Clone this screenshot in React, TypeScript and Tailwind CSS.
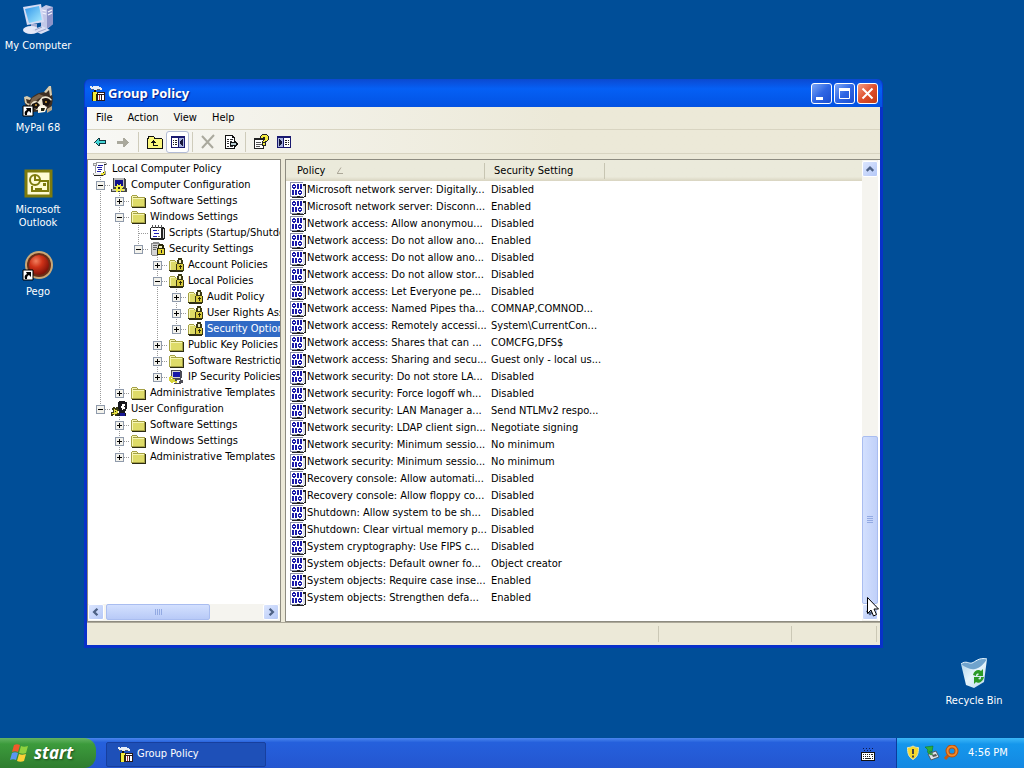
import React, { useState } from 'react';

const FONT = 'font-["DejaVu_Sans_Condensed","Noto_Sans",sans-serif]';

type IconProps = { className?: string };

/* ---------- small icons ---------- */

const Pixel: React.FC<{ children: React.ReactNode; className?: string }> = ({ children, className = 'size-4' }) => (
  <svg viewBox="0 0 16 16" className={`shrink-0 ${className}`} shapeRendering="crispEdges" aria-hidden="true">
    {children}
  </svg>
);

const FolderIcon = () => (
  <Pixel>
    <path d="M1 3h1V2h5v1h1v1h7v10H1z" fill="#a5a145" />
    <path d="M2 5h12v8H2z" fill="#dedb68" />
    <path d="M2 3h5v1H2zM2 4h1v9H2zM3 5h11v1H3z" fill="#f6f5b4" />
    <path d="M15 5h1v10H2v-1h13z" fill="#2c2b12" />
  </Pixel>
);

const LockFolderIcon = () => (
  <Pixel>
    <path d="M1 4h1V3h5v1h1v1h6v8H1z" fill="#a5a145" />
    <path d="M2 5h11v8H2z" fill="#dedb68" />
    <path d="M2 4h5v1H2zM2 5h1v8H2z" fill="#f6f5b4" />
    <path d="M2 14h13v1H2zM1 13h8v1H1z" fill="#2c2b12" />
    <path d="M9 3h1V1h4v2h1v4h1v7H8V7h1z" fill="#3a3812" />
    <path d="M11 3h2v3h-2z" fill="#f0efc0" />
    <path d="M9 7h6v6H9z" fill="#d9cb3c" />
    <path d="M12 8h1v4h-1zM11 9h3v1h-3z" fill="#2b2708" />
  </Pixel>
);

const ServerLockIcon = () => (
  <Pixel>
    <path d="M2 2h2V1h6v1h1v12h-2v1H3v-1H2z" fill="#8b8b8b" />
    <path d="M3 3h6v11H3z" fill="#d5d5d5" />
    <path d="M4 4h4v1H4zM4 6h4v1H4zM4 8h3v1H4z" fill="#666" />
    <path d="M9 4h1V3h4v1h1v3h1v7H8V7h1z" fill="#2a280a" />
    <path d="M10 5h3v2h-3z" fill="#f0efc0" />
    <path d="M9 8h6v5H9z" fill="#e4d334" />
    <path d="M12 9h1v3h-1z" fill="#222" />
  </Pixel>
);

const ScrollIcon = () => (
  <Pixel>
    <path d="M4 1h10v1h1v2h-2v6h1v4h-2v1H2v-1H1v-2h2V5H1V2h3z" fill="#9a9a9a" />
    <path d="M5 2h7v10H4V5h1z" fill="#fff" />
    <path d="M13 4h-1v6h1v4h-2v1H2v-1h9v-3h1V3h2v1z" fill="#222" />
    <path d="M6 4h5v1H6zM5 6h5v1H5zM6 8h4v1H6zM5 10h4v1H5z" fill="#1a1aa6" />
    <path d="M9 12h3v2H9zM12 10h1v3h-1z" fill="#e8e130" />
    <path d="M2 12h7v2H2zM12 2h2v1h-2zM2 3h2v1H2z" fill="#eee" />
  </Pixel>
);

const ComputerIcon = () => (
  <Pixel>
    <path d="M2 1h12v1h1v9h1v4H0v-3h2z" fill="#444" />
    <path d="M3 1h10v9H3z" fill="#b9b9b9" />
    <path d="M4 3h8v6H4z" fill="#10108a" />
    <path d="M1 12h13v2H1z" fill="#bcbcbc" />
    <path d="M6 7h1v1h2V7h1v2h2v2h-1v1h2v2h-2v-1h-1v2H9v-1H7v1H5v-2H3v-1h2v-2H4V9h2z" fill="#f1ee46" />
    <path d="M7 10h2v2H7z" fill="#222" />
  </Pixel>
);

const NotepadIcon = () => (
  <Pixel>
    <path d="M2 2h13v1h1v11h-1v1H2v-1H1V3h1z" fill="#222" />
    <path d="M2 3h10v10H2z" fill="#fff" />
    <path d="M14 4h1v9h-1z" fill="#d9d9d9" />
    <path d="M3 0h1v3H3zM6 0h1v3H6zM9 0h1v3H9zM12 0h1v3h-1z" fill="#555" />
    <path d="M4 5h4v1H4zM5 8h5v1H5zM4 11h4v1H4z" fill="#1d1db4" />
    <path d="M9 5h1v1H9zM9 11h2v1H9z" fill="#777" />
  </Pixel>
);

const IpIcon = () => (
  <Pixel>
    <path d="M3 1h10v1h1v7h-1v2h2v3h-2v1H6v-1h5v-2H3z" fill="#4b4b55" />
    <path d="M4 2h8v7H4z" fill="#d2d2d2" />
    <path d="M5 3h7v5H5z" fill="#1717a8" />
    <path d="M2 7h2v1h1v2h2v2h2v2H7v-1H5v1H3v-1H2v-1H1V8h1z" fill="#d6d33a" />
    <path d="M3 9h1v1H3zM9 11h3v1H9z" fill="#fff" />
  </Pixel>
);

const UserIcon = () => (
  <Pixel>
    <path d="M7 1h1V0h6v1h2v7h-1v2h-1v2h1v3H6v-3h2V9H7z" fill="#17171d" />
    <path d="M11 3h3v6h-3V7h-1V5h1z" fill="#fff" />
    <path d="M13 5h1v1h-1zM12 8h2v1h-2z" fill="#222" />
    <path d="M9 12h5v3H9z" fill="#181894" />
    <path d="M2 6h2v1h1V6h2v2h1v2H7v2h1v2H6v1H4v-1H2v1H0v-4h2V9H1V7h1z" fill="#3a3a12" />
    <path d="M3 8h1v1h2v1h1v2H6v1H4v1H3v-1H1v-1h2z" fill="#e6e040" />
    <path d="M4 10h1v1H4z" fill="#222" />
  </Pixel>
);

const PolicyIcon = () => (
  <Pixel>
    <path d="M0 0h13v15H0z" fill="#8d92a8" />
    <path d="M1 1h12v13H1z" fill="#fff" />
    <path d="M13 2h3v13h-2v-1h1V4h-2zM2 15h5v-1h3v1h4v1H2z" fill="#222" />
    <path d="M13 4h2v10h-2z" fill="#dfe1ea" />
    <path d="M2 2h4v5H2zM7 2h2v5H7zM10 2h2v5h-2zM2 8h2v5H2zM5 8h2v5H5zM8 8h4v5H8z" fill="#1c1caa" />
    <path d="M3 4h2v1H3zM9 10h2v1H9z" fill="#fff" />
    <path d="M2 2h1v1H2zM5 2h1v1H5zM2 6h1v1H2zM5 6h1v1H5zM8 8h1v1H8zM11 8h1v1h-1zM8 12h1v1H8zM11 12h1v1h-1z" fill="#fff" />
  </Pixel>
);

const ToolsIcon = ({ className }: IconProps) => (
  <Pixel className={className}>
    <path d="M1 1h2v1h1V1h6v1h2v1h1v2h-2V4H8v1H5V4H2V3H1z" fill="#e7edf5" />
    <path d="M2 4h2v1H2zM8 4h3v1H8z" fill="#5b6574" />
    <path d="M5 5h2v2H5z" fill="#111" />
    <path d="M4 7h4v9H4z" fill="#f4ec39" />
    <path d="M3 7h1v9H3zM7 9h1v7H7z" fill="#27270a" />
    <path d="M8 7h8v9H8z" fill="#2a1a1a" />
    <path d="M9 8h6v1H9zM9 10h1v5H9zM11 10h1v5h-1zM13 10h2v5h-2z" fill="#fff" />
    <path d="M10 10h1v5h-1z" fill="#b23a3a" />
  </Pixel>
);

/* ---------- toolbar icons ---------- */

const BackIcon = () => (
  <Pixel>
    <path d="M2 8h1V7h1V6h1V5h1V4h2v2h6v4H8v2H6v-1H5v-1H4V9H2z" fill="#10323a" />
    <path d="M3 8h1V7h1V6h1V5h1v2h6v2H7v2H6v-1H5V9H3z" fill="#45d5d6" />
  </Pixel>
);

const ForwardIcon = () => (
  <Pixel>
    <path d="M2 7h6V4h2v1h1v1h1v1h1v1h1v1h-1v1h-1v1h-1v1h-1v1H8v-3H2z" fill="#aaa99d" />
  </Pixel>
);

const UpIcon = () => (
  <Pixel>
    <path d="M0 4h1V2h6v1h1v1h7v1h1v10H0z" fill="#111" />
    <path d="M1 5h14v9H1zM2 3h5v2H2z" fill="#fbf77c" />
    <path d="M6 6h1v1h1v1h1v1H7v2h4v1H6V9H4V8h1V7h1z" fill="#111" />
  </Pixel>
);

const PaneIcon = ({ flip }: { flip?: boolean }) => (
  <Pixel className={flip ? 'size-4 -scale-x-100' : 'size-4'}>
    <path d="M1 2h14v12H1z" fill="#191970" />
    <path d="M2 4h6v9H2z" fill="#fff" />
    <path d="M9 4h5v9H9z" fill="#a9b4de" />
    <path d="M3 6h1v1H3zM5 6h2v1H5zM3 8h1v1H3zM5 8h2v1H5zM3 10h1v1H3zM5 10h2v1H5z" fill="#222" />
    <path d="M12 5h1v7h-1v-1h-1v-1h-1V7h1V6h1z" fill="#16163a" />
  </Pixel>
);

const DeleteIcon = () => (
  <svg viewBox="0 0 16 16" className="size-4" aria-hidden="true">
    <path d="M2 2l11 12M14 1L2 14" stroke="#aaa99d" strokeWidth="2" fill="none" />
  </svg>
);

const ExportIcon = () => (
  <Pixel>
    <path d="M2 1h8v1h1v1h1v12H2z" fill="#111" />
    <path d="M3 2h6v2h2v10H3z" fill="#fff" />
    <path d="M4 5h2v1H4zM7 5h3v1H7zM4 7h2v1H4zM7 7h2v1H7zM4 9h2v1H4zM4 12h2v1H4zM7 12h3v1H7z" fill="#333" />
    <path d="M7 8h4V6h1v1h1v1h1v1h1v2h-1v1h-1v1h-1v1h-1v-2H7z" fill="#111" />
    <path d="M8 9h5v2H8z" fill="#b8cdd0" />
  </Pixel>
);

const PropertiesIcon = () => (
  <Pixel>
    <path d="M1 4h10v11H1z" fill="#222" />
    <path d="M2 6h8v8H2z" fill="#fff" />
    <path d="M3 8h5v1H3zM3 10h6v1H3zM3 12h4v1H3z" fill="#555" />
    <path d="M7 2h1V1h1V0h5v1h1v1h1v4h-1v1h-1v1h-1v4h-4V7h2V5H7z" fill="#222" />
    <path d="M8 2h1V1h5v1h1v4h-1v1h-2v1h-2V7h1V6h1V3h-2v1H8zM10 9h2v2h-2z" fill="#f4eb3f" />
  </Pixel>
);

/* ---------- desktop icons ---------- */

const ShortcutArrow = () => (
  <g>
    <path d="M1 21h10v10H1z" fill="#fff" stroke="#000" strokeWidth="1" />
    <path d="M4 23h5v5l-2-2c-2 1-2 2-2 4H3c-1-3 0-4 2-5z" fill="#000" />
  </g>
);

const MyComputerIcon = () => (
  <svg viewBox="0 0 32 32" className="size-8" aria-hidden="true">
    <defs>
      <linearGradient id="screen" x1="0" y1="0" x2="1" y2="1">
        <stop offset="0" stopColor="#2f95ea" />
        <stop offset="1" stopColor="#a9ecff" />
      </linearGradient>
    </defs>
    <path d="M19 5l5-3 7 2v17l-6 5-6-2z" fill="#c3c8e8" />
    <path d="M25 6l6-2v17l-6 5z" fill="#8d93c8" />
    <path d="M20 7l4 1M20 10l4 1M26 9l4-2M26 12l4-2" stroke="#f5f7ff" strokeWidth="1.2" />
    <path d="M1 4L19 1l3 18-17 3z" fill="#d5dbf4" />
    <path d="M3 6l14-3 3 14-13 3z" fill="url(#screen)" />
    <path d="M9 21h6v4H9z" fill="#a7afd5" />
    <ellipse cx="9" cy="27" rx="8" ry="4" fill="#e6e9f8" />
    <path d="M10 27l10-4 8 4-9 4z" fill="#dadff4" />
    <path d="M13 27l7-3M16 29l8-3" stroke="#9da5cd" />
  </svg>
);

const RaccoonIcon = () => (
  <svg viewBox="0 0 32 32" className="size-8" aria-hidden="true">
    <path d="M2 15l1-3 6 1c4-4 9-6 14-6l3-5 3-1 1 8c1 5 1 9-1 13l-6 4-13 1C6 25 3 20 2 15z" fill="#3d2e22" />
    <path d="M2 12l3-1 4 2-1 2-4-1 1 4 3 1-1 2-4-3zM22 7l5-6h2l1 9-2 1-1-6-3 3z" fill="#d9cdb0" />
    <path d="M10 13l7-4 5 2-6 3-5 5-4 1z" fill="#7a644d" />
    <path d="M8 21c2-5 5-6 8-4l4-5c4-2 8 0 10 3l-4 2-4 5-7 3z" fill="#efe7d3" />
    <path d="M10 19l5-2 3 3-3 4-6-1zM20 14c4-2 7-1 9 2l-3 5-5-1z" fill="#1c1410" />
    <path d="M16 22l5-2 4 2-2 5-7 1z" fill="#fff8e8" />
    <path d="M19 23h4l-1 3h-3z" fill="#221" />
    <circle cx="14" cy="20" r="1" fill="#d6a23c" />
    <circle cx="24" cy="17" r="1" fill="#d6a23c" />
    <path d="M25 24l5-3v4l-5 3z" fill="#b7a483" />
    <ShortcutArrow />
  </svg>
);

const OutlookIcon = () => (
  <svg viewBox="0 0 32 32" className="size-8" aria-hidden="true">
    <path d="M4 4h25v25H4z" fill="#fffbd2" stroke="#7d7b0d" strokeWidth="3" />
    <circle cx="13" cy="13" r="5" fill="#fffbd2" stroke="#7d7b0d" strokeWidth="2" />
    <path d="M13 9v4h4" fill="none" stroke="#7d7b0d" strokeWidth="2" />
    <path d="M10 19v5h16V14h-8" fill="none" stroke="#7d7b0d" strokeWidth="2" />
    <path d="M13 22h7" stroke="#7d7b0d" strokeWidth="2" />
    <path d="M21 16h3v3h-3z" fill="#7d7b0d" />
  </svg>
);

const PegoIcon = () => (
  <svg viewBox="0 0 32 32" className="size-8" aria-hidden="true">
    <defs>
      <radialGradient id="ball" cx="0.35" cy="0.3" r="0.8">
        <stop offset="0" stopColor="#f2805f" />
        <stop offset="0.4" stopColor="#cf3218" />
        <stop offset="1" stopColor="#6e0c06" />
      </radialGradient>
    </defs>
    <circle cx="17" cy="16" r="14" fill="#c9a877" />
    <circle cx="17" cy="16" r="12" fill="#6a2d17" />
    <circle cx="17" cy="16" r="10" fill="url(#ball)" />
    <ShortcutArrow />
  </svg>
);

const RecycleIcon = () => (
  <svg viewBox="0 0 32 32" className="size-8" aria-hidden="true">
    <defs>
      <linearGradient id="bin" x1="0" y1="0" x2="1" y2="1">
        <stop offset="0" stopColor="#a8cfe8" />
        <stop offset="0.5" stopColor="#e6f4fb" />
        <stop offset="1" stopColor="#b9d5ea" />
      </linearGradient>
    </defs>
    <path d="M3 6l9 3 17-8-3 23-10 6-8-3z" fill="url(#bin)" />
    <path d="M3 6c5-4 8 0 11-1s7-6 15-4c-3 5-7 9-12 10S7 9 3 6z" fill="#6fa3cd" />
    <path d="M3 6c5-4 8 0 11-1s7-6 15-4" fill="none" stroke="#eaf7ff" />
    <path
      d="M15 17c1-5 6-6 8-4l2-2v7h-6l2-2c-2-1-3 0-3 2zM26 19c-1 5-6 7-8 5l-2 2v-7h6l-2 2c3 1 3 0 3-2z"
      fill="#2b9a27"
    />
  </svg>
);

const FlagIcon = () => (
  <svg viewBox="0 0 20 20" className="size-5" aria-hidden="true">
    <path d="M4 2c2-1 4-1 6 0L8 9C6 8 4 8 2 9z" fill="#f0592b" />
    <path d="M11 3c2 1 4 1 7 0l-2 7c-2 1-4 1-7 0z" fill="#8fd23f" />
    <path d="M2 10c2-1 4-1 6 0l-2 7c-2-1-4-1-6 0z" fill="#5a96f2" />
    <path d="M9 11c2 1 4 1 7 0l-2 7c-2 1-5 1-7 0z" fill="#fbd137" />
  </svg>
);

/* ---------- tree ---------- */

type Node = {
  label: string;
  icon: React.ReactNode;
  // one char per level: "|" line runs on, " " empty, "+"/"-" expander, "." leaf
  guide: string;
  last?: boolean;
  selected?: boolean;
};

const tree: Node[] = [
  { label: 'Local Computer Policy', icon: <ScrollIcon />, guide: '' },
  { label: 'Computer Configuration', icon: <ComputerIcon />, guide: '-' },
  { label: 'Software Settings', icon: <FolderIcon />, guide: '|+' },
  { label: 'Windows Settings', icon: <FolderIcon />, guide: '|-' },
  { label: 'Scripts (Startup/Shutdown)', icon: <NotepadIcon />, guide: '||.' },
  { label: 'Security Settings', icon: <ServerLockIcon />, guide: '||-', last: true },
  { label: 'Account Policies', icon: <LockFolderIcon />, guide: '|| +' },
  { label: 'Local Policies', icon: <LockFolderIcon />, guide: '|| -' },
  { label: 'Audit Policy', icon: <LockFolderIcon />, guide: '|| |+' },
  { label: 'User Rights Assignment', icon: <LockFolderIcon />, guide: '|| |+' },
  { label: 'Security Options', icon: <LockFolderIcon />, guide: '|| |+', last: true, selected: true },
  { label: 'Public Key Policies', icon: <FolderIcon />, guide: '|| +' },
  { label: 'Software Restriction Policies', icon: <FolderIcon />, guide: '|| +' },
  { label: 'IP Security Policies on Local Computer', icon: <IpIcon />, guide: '|| +', last: true },
  { label: 'Administrative Templates', icon: <FolderIcon />, guide: '|+', last: true },
  { label: 'User Configuration', icon: <UserIcon />, guide: '-', last: true },
  { label: 'Software Settings', icon: <FolderIcon />, guide: ' +' },
  { label: 'Windows Settings', icon: <FolderIcon />, guide: ' +' },
  { label: 'Administrative Templates', icon: <FolderIcon />, guide: ' +', last: true },
];

const GuideCell: React.FC<{ kind: string; last?: boolean }> = ({ kind, last }) => {
  const art = (
    <svg viewBox="0 0 19 16" className="h-4 w-[19px] shrink-0" shapeRendering="crispEdges" aria-hidden="true">
      {kind !== ' ' && (
        <path d={last ? 'M8.5 0v8' : 'M8.5 0v16'} stroke="#9a9a9a" strokeDasharray="1 1" fill="none" />
      )}
      {kind !== ' ' && kind !== '|' && <path d="M9 8.5h10" stroke="#9a9a9a" strokeDasharray="1 1" fill="none" />}
      {(kind === '+' || kind === '-') && (
        <>
          <path d="M4.5 4.5h8v8h-8z" fill="#f3f2ec" stroke="#8f9aab" />
          <path d={kind === '+' ? 'M6 8h5v1H6zM8 6h1v5H8z' : 'M6 8h5v1H6z'} fill="#000" />
        </>
      )}
    </svg>
  );
  if (kind === '+' || kind === '-') {
    return (
      <button type="button" aria-label={kind === '+' ? 'Expand' : 'Collapse'} className="shrink-0">
        {art}
      </button>
    );
  }
  return art;
};

const TreeRow: React.FC<{ node: Node }> = ({ node }) => (
  <li className="flex h-4 items-center">
    {node.guide.split('').map((kind, i) => (
      <GuideCell key={i} kind={kind} last={node.last && i === node.guide.length - 1} />
    ))}
    {node.icon}
    <span
      className={`ml-0.5 h-4 px-0.5 leading-4 whitespace-nowrap ${node.selected ? 'bg-[#316ac5] text-white' : ''}`}
    >
      {node.label}
    </span>
  </li>
);

/* ---------- policy list ---------- */

const policies: [string, string][] = [
  ['Microsoft network server: Digitally...', 'Disabled'],
  ['Microsoft network server: Disconn...', 'Enabled'],
  ['Network access: Allow anonymou...', 'Disabled'],
  ['Network access: Do not allow ano...', 'Enabled'],
  ['Network access: Do not allow ano...', 'Disabled'],
  ['Network access: Do not allow stor...', 'Disabled'],
  ['Network access: Let Everyone pe...', 'Disabled'],
  ['Network access: Named Pipes tha...', 'COMNAP,COMNOD...'],
  ['Network access: Remotely accessi...', 'System\\CurrentCon...'],
  ['Network access: Shares that can ...', 'COMCFG,DFS$'],
  ['Network access: Sharing and secu...', 'Guest only - local us...'],
  ['Network security: Do not store LA...', 'Disabled'],
  ['Network security: Force logoff wh...', 'Disabled'],
  ['Network security: LAN Manager a...', 'Send NTLMv2 respo...'],
  ['Network security: LDAP client sign...', 'Negotiate signing'],
  ['Network security: Minimum sessio...', 'No minimum'],
  ['Network security: Minimum sessio...', 'No minimum'],
  ['Recovery console: Allow automati...', 'Disabled'],
  ['Recovery console: Allow floppy co...', 'Disabled'],
  ['Shutdown: Allow system to be sh...', 'Disabled'],
  ['Shutdown: Clear virtual memory p...', 'Disabled'],
  ['System cryptography: Use FIPS c...', 'Disabled'],
  ['System objects: Default owner fo...', 'Object creator'],
  ['System objects: Require case inse...', 'Enabled'],
  ['System objects: Strengthen defa...', 'Enabled'],
];

const PolicyTable = () => (
  <table className="w-full table-fixed border-collapse">
    <colgroup>
      <col className="w-[199px]" />
      <col className="w-[120px]" />
      <col />
    </colgroup>
    <thead>
      <tr className="h-[21px] bg-linear-to-b from-[#ebeadb] from-80% to-[#d8d4c0] text-left">
        <th className="p-0 font-normal">
          <div className="flex h-4 items-center gap-3 border-r border-[#c7c5b2] pl-[11px]">
            Policy
            <svg viewBox="0 0 7 7" className="size-[7px]" aria-hidden="true">
              <path d="M0 6.500h6M0.500 6L4 0.500" stroke="#aca899" fill="none" />
            </svg>
          </div>
        </th>
        <th className="p-0 font-normal">
          <div className="flex h-4 items-center border-r border-[#c7c5b2] pl-[9px]">Security Setting</div>
        </th>
        <th className="p-0" />
      </tr>
    </thead>
    <tbody>
      {policies.map(([name, setting], i) => (
        <tr key={i} className="h-[17px]">
          <td className="p-0">
            <div className="flex h-[17px] items-center gap-px pl-1 whitespace-nowrap">
              <PolicyIcon />
              {name}
            </div>
          </td>
          <td className="p-0 pl-1.5 whitespace-nowrap">{setting}</td>
          <td className="p-0" />
        </tr>
      ))}
    </tbody>
  </table>
);

/* ---------- scrollbars ---------- */

const chevrons = {
  up: 'M4 9.500l3.500-3.500L11 9.500',
  down: 'M4 6l3.500 3.500L11 6',
  left: 'M9 4L5.500 7.500L9 11',
  right: 'M6 4l3.500 3.500L6 11',
};

const ScrollButton: React.FC<{ dir: keyof typeof chevrons }> = ({ dir }) => (
  <button
    type="button"
    aria-label={`Scroll ${dir}`}
    className="flex size-4 shrink-0 items-center justify-center rounded-xs border border-white bg-linear-to-br from-[#dce6fe] to-[#b5c8f7]"
  >
    <svg viewBox="0 0 15 15" className="size-[14px]">
      <path d={chevrons[dir]} stroke="#4d6185" strokeWidth="2.500" fill="none" />
    </svg>
  </button>
);

/* ---------- window ---------- */

const CaptionButton: React.FC<{ label: string; close?: boolean; children: React.ReactNode }> = ({
  label,
  close,
  children,
}) => (
  <button
    type="button"
    aria-label={label}
    className={`flex size-[21px] items-center justify-center rounded-[3px] border border-white bg-linear-to-br ${
      close ? 'from-[#f09a80] via-[#df4f2c] to-[#c23a12]' : 'from-[#7ea6f5] via-[#2f66e4] to-[#1b4ed0]'
    }`}
  >
    <svg viewBox="0 0 19 19" className="size-[19px]" stroke="#fff" fill="none">
      {children}
    </svg>
  </button>
);

const ToolButton: React.FC<{ label: string; active?: boolean; children: React.ReactNode }> = ({
  label,
  active,
  children,
}) => (
  <button
    type="button"
    aria-label={label}
    className={`flex h-[22px] w-[23px] items-center justify-center rounded-[3px] border ${
      active ? 'border-[#b3bcd6] bg-white' : 'border-transparent'
    }`}
  >
    {children}
  </button>
);

const Separator = ({ wide }: { wide?: boolean }) => (
  <div className={`h-5 w-px bg-[#cfccbb] ${wide ? 'mx-1' : 'mx-[3px]'}`} />
);

const GroupPolicyWindow = () => (
  <section
    aria-label="Group Policy"
    className="absolute top-[79px] right-[141px] bottom-[120px] left-[84px] flex flex-col rounded-t-lg bg-[#0831c9] px-[3px] pb-[3px]"
  >
    <header className="-mx-[3px] flex h-7 shrink-0 items-center rounded-t-md border-x border-[#0a3bd0] bg-linear-to-b from-[#0b49d0] via-[#0560f5] via-35% to-[#0352e2] pr-1 pl-1">
      <ToolsIcon className="size-4" />
      <h1 className='ml-[3px] grow font-["Noto_Sans",sans-serif] text-[13px] leading-5 font-bold text-white [text-shadow:1px_1px_1px_#0a1883]'>
        Group Policy
      </h1>
      <div className="flex gap-0.5">
        <CaptionButton label="Minimize">
          <path d="M4 14.500h7" strokeWidth="3" />
        </CaptionButton>
        <CaptionButton label="Maximize">
          <path d="M4.500 5v9.500h10V5" />
          <path d="M4 5.500h11" strokeWidth="3" />
        </CaptionButton>
        <CaptionButton label="Close" close>
          <path d="M4.500 4.500l10 10M14.500 4.500l-10 10" strokeWidth="2" />
        </CaptionButton>
      </div>
    </header>

    <div className="flex min-h-0 grow flex-col bg-[#ece9d8]">
      <nav className="flex h-[23px] shrink-0 items-center gap-[15px] border-b border-[#d8d4c1] bg-linear-to-r from-[#f8f8f5] to-[#ece9d8] to-60% pl-[9px]">
        {['File', 'Action', 'View', 'Help'].map((m) => (
          <button key={m} type="button">
            {m}
          </button>
        ))}
      </nav>
      <div className="flex h-6 shrink-0 items-center border-b border-[#d8d4c1] bg-linear-to-r from-[#f8f8f5] to-[#ece9d8] to-60% pl-px">
        <ToolButton label="Back">
          <BackIcon />
        </ToolButton>
        <ToolButton label="Forward">
          <ForwardIcon />
        </ToolButton>
        <Separator wide />
        <ToolButton label="Up one level">
          <UpIcon />
        </ToolButton>
        <ToolButton label="Show/Hide console tree" active>
          <PaneIcon />
        </ToolButton>
        <Separator />
        <ToolButton label="Delete">
          <DeleteIcon />
        </ToolButton>
        <ToolButton label="Export list">
          <ExportIcon />
        </ToolButton>
        <Separator />
        <ToolButton label="Help">
          <PropertiesIcon />
        </ToolButton>
        <ToolButton label="Show action pane">
          <PaneIcon flip />
        </ToolButton>
      </div>

      <div className="flex min-h-0 grow gap-1 pt-[5px]">
        <div className="flex w-[194px] shrink-0 flex-col border border-[#8d8b80] bg-white">
          <ul className="grow overflow-hidden pt-px pl-1">
            {tree.map((node, i) => (
              <TreeRow key={i} node={node} />
            ))}
          </ul>
          <div className="flex shrink-0 items-center bg-[#f5f4ef] pr-px pb-px">
            <ScrollButton dir="left" />
            <div className="ml-0.5 flex h-4 w-[104px] items-center justify-center gap-px rounded-xs border border-[#a9bdf0] bg-linear-to-b from-[#d3e0fe] to-[#b8caf7]">
              {[0, 1, 2, 3].map((n) => (
                <i key={n} className="h-1.5 w-px bg-[#93aae3]" />
              ))}
            </div>
            <div className="grow" />
            <ScrollButton dir="right" />
          </div>
        </div>

        <div className="flex min-w-0 grow border border-r-0 border-[#8d8b80] bg-white">
          <div className="min-w-0 grow overflow-hidden">
            <PolicyTable />
          </div>
          <div className="mr-0.5 flex w-4 shrink-0 flex-col bg-[#f5f4ef] py-px">
            <ScrollButton dir="up" />
            <div className="grow-[263]" />
            <div className="flex grow-[162] flex-col items-center justify-center gap-px rounded-xs border border-[#a9bdf0] bg-linear-to-r from-[#d3e0fe] to-[#c0d0f9]">
              {[0, 1, 2, 3].map((n) => (
                <i key={n} className="h-px w-1.5 bg-[#93aae3]" />
              ))}
            </div>
            <ScrollButton dir="down" />
          </div>
        </div>
      </div>

      <footer className="flex h-[23px] shrink-0 border-t border-[#aca899] py-[3px]">
        <div className="grow border-r border-[#cbc8b6]" />
        <div className="w-[133px] border-r border-[#cbc8b6]" />
        <div className="mr-[3px] w-[85px] border-r border-[#cbc8b6]" />
      </footer>
    </div>
  </section>
);

/* ---------- desktop ---------- */

const DesktopIcon: React.FC<{ label: string; place: string; children: React.ReactNode }> = ({
  label,
  place,
  children,
}) => (
  <button type="button" className={`absolute flex w-[76px] flex-col items-center gap-1 text-white ${place}`}>
    {children}
    <span className="leading-[13px]">{label}</span>
  </button>
);

const Taskbar: React.FC<{ open: boolean; onToggle: () => void }> = ({ open, onToggle }) => (
  <footer className="absolute inset-x-0 bottom-0 flex h-[30px] items-center bg-linear-to-b from-[#4a86ee] via-[#2560dc] via-15% to-[#2456d0] text-white">
    <button
      type="button"
      className="flex h-full w-24 items-center gap-1 rounded-r-xl bg-linear-to-b from-[#63b463] via-[#3c9b3c] via-20% to-[#2f7d2f] pl-2.5"
    >
      <FlagIcon />
      <span className='font-["Open_Sans",sans-serif] text-[17px] leading-6 font-bold italic [text-shadow:1px_1px_2px_#1c4a1c]'>
        start
      </span>
    </button>
    <button
      type="button"
      onClick={onToggle}
      aria-pressed={open}
      className="mt-0.5 ml-2.5 flex h-[25px] w-40 items-center gap-1 rounded-xs border border-[#173f9e] bg-[#1e50b8] pl-2.5"
    >
      <ToolsIcon className="size-4" />
      Group Policy
    </button>
    <div className="grow" />
    <Pixel className="mt-1 mr-5 size-4">
      <path d="M3 1h1v1H3zM6 1h1v1H6zM9 1h1v1H9zM12 1h1v1h-1zM4 3h1v1H4zM7 3h1v1H7zM10 3h1v1h-1z" fill="#0c1b4e" />
      <path d="M1 5h14v9H1z" fill="#111" />
      <path d="M2 6h12v7H2z" fill="#fff" />
      <path
        d="M3 7h1v1H3zM5 7h1v1H5zM7 7h1v1H7zM9 7h1v1H9zM11 7h2v1h-2zM3 9h1v1H3zM5 9h1v1H5zM7 9h1v1H7zM9 9h1v1H9zM12 9h1v1h-1zM3 11h1v1H3zM5 11h6v1H5zM12 11h1v1h-1z"
        fill="#222"
      />
    </Pixel>
    <div className="flex h-full w-32 items-center gap-[3px] border-l border-[#0b3c9c] bg-linear-to-b from-[#3bb8f8] via-[#1597ec] via-20% to-[#1488e2] pl-2">
      <svg viewBox="0 0 16 16" className="size-4" aria-hidden="true">
        <path
          d="M8 1c2 1 3 1.500 5.500 1.500 0 6-1 9.500-5.500 12-4.500-2.500-5.500-6-5.500-12C5 2.500 6 2 8 1z"
          fill="#f7d92b"
          stroke="#e9e3b0"
        />
        <path d="M7 4h2v5H7zM7 10.500h2v2H7z" fill="#444" />
      </svg>
      <svg viewBox="0 0 16 16" className="size-4" aria-hidden="true">
        <path d="M4 9l8-3 3 6-8 3z" fill="#dfe3e8" stroke="#4c5a66" />
        <path d="M8 10l4-1 1 2-4 1z" fill="#555" />
        <path d="M7 10C3 8 3 6 4 5L1 2l8-1-1 6-2-1c-1 1 0 2 3 3z" fill="#2fae3b" stroke="#0f6c1c" strokeWidth="0.500" />
      </svg>
      <svg viewBox="0 0 16 16" className="size-4" aria-hidden="true">
        <path d="M6 9.500L2 14" stroke="#c55a12" strokeWidth="3" />
        <circle cx="9" cy="6" r="4.500" fill="none" stroke="#b94e0d" strokeWidth="4" />
        <circle cx="9" cy="6" r="4.500" fill="none" stroke="#f08a2c" strokeWidth="2" />
      </svg>
      <time className="ml-1.5">4:56 PM</time>
    </div>
  </footer>
);

const App: React.FC = () => {
  const [open, setOpen] = useState(true);

  return (
    <main
      className={`relative h-screen min-h-[600px] overflow-hidden bg-[#004e98] text-[11px] leading-4 text-black select-none ${FONT}`}
    >
      <DesktopIcon label="My Computer" place="left-0 top-[3px]">
        <MyComputerIcon />
      </DesktopIcon>
      <DesktopIcon label="MyPal 68" place="left-0 top-[85px]">
        <RaccoonIcon />
      </DesktopIcon>
      <DesktopIcon label="Microsoft Outlook" place="left-0 top-[167px]">
        <OutlookIcon />
      </DesktopIcon>
      <DesktopIcon label="Pego" place="left-0 top-[249px]">
        <PegoIcon />
      </DesktopIcon>
      <DesktopIcon label="Recycle Bin" place="right-3 bottom-[61px]">
        <RecycleIcon />
      </DesktopIcon>

      {open && <GroupPolicyWindow />}

      <Taskbar open={open} onToggle={() => setOpen(!open)} />

      {/* mouse pointer */}
      <svg viewBox="0 0 12 20" className="absolute top-[597px] left-[867px] h-5 w-3" aria-hidden="true">
        <path d="M0.500 0.500v16l3.500-3.500 2.500 6 3-1.500-2.500-5.500h4.500z" fill="#fff" stroke="#000" />
      </svg>
    </main>
  );
};

export default App;
